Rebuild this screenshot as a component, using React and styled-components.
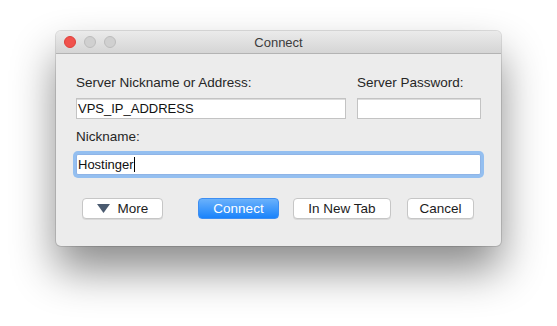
import React from "react";
import styled, { createGlobalStyle } from "styled-components";

const Global = createGlobalStyle`
  html, body {
    margin: 0;
    padding: 0;
    background: #ffffff;
  }
  body {
    font-family: "Liberation Sans", Arial, sans-serif;
    font-size: 13px;
    color: #222;
  }
`;

const Page = styled.div`
  width: 557px;
  height: 326px;
  padding-top: 31px;
  box-sizing: border-box;
  display: flex;
  justify-content: center;
  align-items: flex-start;
`;

const Window = styled.div`
  width: 445px;
  background: #ececec;
  border-radius: 5px;
  box-shadow: 0 24px 44px rgba(0, 0, 0, 0.46), 0 0 0 1px rgba(0, 0, 0, 0.12);
  overflow: hidden;
`;

const TitleBar = styled.div`
  height: 22px;
  display: flex;
  align-items: center;
  position: relative;
  background: linear-gradient(#ebebeb, #d5d5d5);
  border-bottom: 1px solid #b3b3b3;
`;

const Lights = styled.div`
  display: flex;
  gap: 8px;
  padding-left: 8px;
`;

const Light = styled.span`
  width: 12px;
  height: 12px;
  border-radius: 50%;
  box-sizing: border-box;
  background: ${(p) => (p.$red ? "#f0524d" : "#d0d0d0")};
  border: 1px solid ${(p) => (p.$red ? "#de3f39" : "#bcbcbc")};
`;

const Title = styled.div`
  position: absolute;
  left: 0;
  right: 0;
  text-align: center;
  font-size: 13px;
  color: #3c3c3c;
  pointer-events: none;
`;

const Body = styled.div`
  padding: 21px 20px 27px 20px;
`;

const TopGrid = styled.div`
  display: grid;
  grid-template-columns: 270px 124px;
  column-gap: 11px;
  row-gap: 7px;
`;

const Label = styled.div`
  line-height: 16px;
  height: 16px;
  font-size: 13.5px;
  color: #262626;
`;

const Field = styled.div`
  height: 21px;
  box-sizing: border-box;
  background: #fff;
  border: 1px solid ${(p) => (p.$focus ? "#8fb4e6" : "#c3c3c3")};
  box-shadow: ${(p) =>
    p.$focus ? "0 0 0 3px #94bff0" : "inset 0 1px 0 #dcdcdc"};
  border-radius: ${(p) => (p.$focus ? "2px" : "0")};
  padding: 0 1px;
  display: flex;
  align-items: center;
  color: #111;
  font-size: 13px;
  white-space: nowrap;
`;

const Caret = styled.span`
  display: inline-block;
  width: 1px;
  height: 15px;
  background: #000;
`;

const NickLabel = styled(Label)`
  margin-top: 10px;
  margin-bottom: 9px;
`;

const ButtonRow = styled.div`
  display: flex;
  align-items: center;
  margin-top: 23px;
  padding-left: 6px;
  gap: 14px;
`;

const Button = styled.div`
  width: ${(p) => p.$w}px;
  height: 21px;
  box-sizing: border-box;
  border-radius: 4px;
  display: flex;
  align-items: center;
  justify-content: center;
  gap: 8px;
  font-size: 13.5px;
  margin-right: ${(p) => p.$after || 0}px;
  margin-left: ${(p) => p.$before || 0}px;
  color: ${(p) => (p.$primary ? "#fff" : "#1c1c1c")};
  background: ${(p) =>
    p.$primary ? "linear-gradient(#6ab1fb, #1a83fb)" : "#fff"};
  border: 1px solid ${(p) => (p.$primary ? "#3d8ef2" : "#c6c6c6")};
  box-shadow: ${(p) =>
    p.$primary ? "none" : "0 1px 0 rgba(0,0,0,0.08)"};
`;

const Triangle = styled.svg`
  width: 13px;
  height: 9px;
`;

export default function App() {
  return (
    <>
      <Global />
      <Page>
        <Window>
          <TitleBar>
            <Lights>
              <Light $red />
              <Light />
              <Light />
            </Lights>
            <Title>Connect</Title>
          </TitleBar>
          <Body>
            <TopGrid>
              <Label>Server Nickname or Address:</Label>
              <Label>Server Password:</Label>
              <Field>VPS_IP_ADDRESS</Field>
              <Field />
            </TopGrid>
            <NickLabel>Nickname:</NickLabel>
            <Field $focus>
              Hostinger
              <Caret />
            </Field>
            <ButtonRow>
              <Button $w={81} $after={21}>
                <Triangle viewBox="0 0 13 9">
                  <path d="M0 0 H13 L6.5 9 Z" fill="#4b5b70" />
                </Triangle>
                More
              </Button>
              <Button $w={81} $primary>
                Connect
              </Button>
              <Button $w={98}>In New Tab</Button>
              <Button $w={67} $before={2}>
                Cancel
              </Button>
            </ButtonRow>
          </Body>
        </Window>
      </Page>
    </>
  );
}
